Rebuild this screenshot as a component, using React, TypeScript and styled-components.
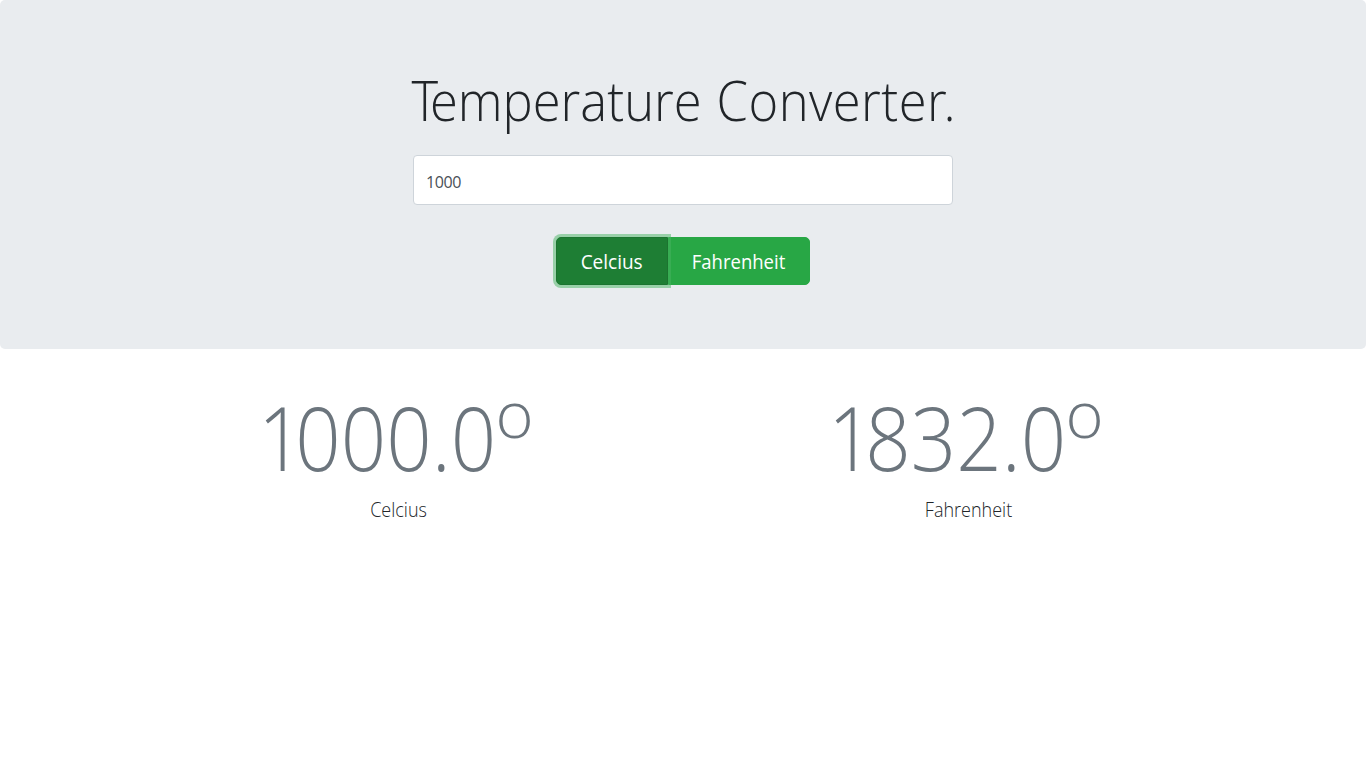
import React from "react";
import styled, { createGlobalStyle } from "styled-components";

const GlobalStyle = createGlobalStyle`
  *, *::before, *::after { box-sizing: border-box; }
  body {
    margin: 0;
    background: #fff;
    color: #212529;
    font-family: "Segoe UI", "Open Sans", "Noto Sans", sans-serif;
    font-size: 16px;
    line-height: 1.5;
    overflow: hidden;
  }
`;

const Condensed = styled.span<{ $scale: number }>`
  display: inline-block;
  transform: scaleX(${(p) => p.$scale});
`;

const Jumbotron = styled.header`
  display: flex;
  flex-direction: column;
  align-items: center;
  height: 349px;
  padding-top: 66px;
  background: #e9ecef;
  border-radius: 5px;
`;

const Title = styled.h1`
  margin: 0 0 22px;
  padding-left: 1px;
  font-size: 56px;
  font-weight: 300;
  line-height: 67px;
  white-space: nowrap;
`;

const Kern = styled.span<{ $by: number }>`
  letter-spacing: ${(p) => p.$by}px;
`;

const TemperatureInput = styled.input`
  width: 540px;
  height: 50px;
  padding: 9px 12px 6px;
  border: 1px solid #ced4da;
  border-radius: 4px;
  background: #fff;
  color: #495057;
  font: inherit;
  letter-spacing: -0.4px;
  outline: none;
`;

const ButtonGroup = styled.div`
  display: flex;
  margin-top: 32px;
`;

const UnitButton = styled.button<{ $active?: boolean; $width: number }>`
  width: ${(p) => p.$width}px;
  height: 48px;
  padding: 2px 0 0;
  border: 1px solid ${(p) => (p.$active ? "#1c7430" : "#28a745")};
  border-radius: ${(p) => (p.$active ? "5px 0 0 5px" : "0 5px 5px 0")};
  background: ${(p) => (p.$active ? "#1e7e34" : "#28a745")};
  box-shadow: ${(p) => (p.$active ? "0 0 0 3px rgba(72, 180, 97, 0.5)" : "none")};
  z-index: ${(p) => (p.$active ? 1 : 0)};
  color: #fff;
  font: inherit;
  font-weight: 450;
  font-size: 20px;
`;

const Results = styled.main`
  display: grid;
  grid-template-columns: 570px 570px;
  justify-content: center;
  padding-top: 31px;
  text-align: center;
`;

const Reading = styled.div`
  display: flex;
  justify-content: center;
  height: 115px;
  padding-right: 9px;
  color: #6c757d;
  font-size: 88px;
  font-weight: 300;
  line-height: 115px;
  white-space: nowrap;
`;

const Digits = styled.span`
  transform: scaleX(0.905);
  transform-origin: right;
  margin-left: -20px;
`;

const Degree = styled.span`
  margin-left: -1px;
  font-size: 65px;
  font-weight: 300;
  line-height: 66px;
`;

const UnitName = styled.div`
  padding-left: 1px;
  font-size: 20px;
  font-weight: 300;
  line-height: 30px;
`;

const readings = [
  { value: "1000.0", unit: "Celcius" },
  { value: "1832.0", unit: "Fahrenheit" },
];

export default function App() {
  return (
    <>
      <GlobalStyle />
      <Jumbotron>
        <Title>
          <Condensed $scale={0.905}>
            <Kern $by={-9}>T</Kern>emperature<Kern $by={2}> </Kern>
            <Kern $by={0.5}>Converte</Kern>
            <Kern $by={-3.5}>r</Kern>.
          </Condensed>
        </Title>
        <TemperatureInput defaultValue="1000" />
        <ButtonGroup>
          <UnitButton $active $width={112}>
            <Condensed $scale={0.95}>Celcius</Condensed>
          </UnitButton>
          <UnitButton $width={142}>
            <Condensed $scale={0.925}>Fahrenheit</Condensed>
          </UnitButton>
        </ButtonGroup>
      </Jumbotron>
      <Results>
        {readings.map((r) => (
          <section key={r.unit}>
            <Reading>
              <Digits>
                <Kern $by={-9}>{r.value[0]}</Kern>
                {r.value.slice(1)}
              </Digits>
              <Degree>o</Degree>
            </Reading>
            <UnitName>
              <Condensed $scale={0.9}>{r.unit}</Condensed>
            </UnitName>
          </section>
        ))}
      </Results>
    </>
  );
}
